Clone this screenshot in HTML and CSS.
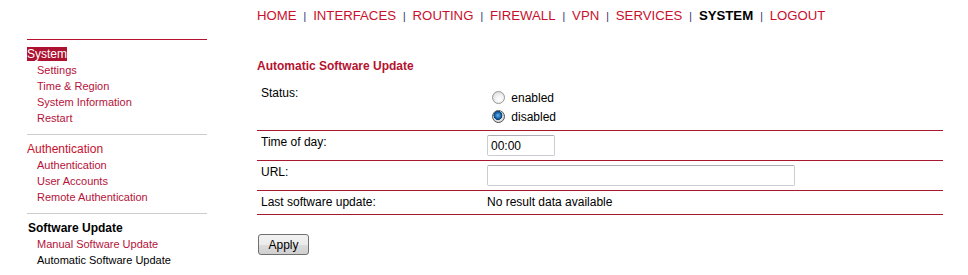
FILE: index.html
```html
<!DOCTYPE html>
<html lang="en">
<head>
  <meta charset="UTF-8">
  <title>System - Automatic Software Update</title>
  <link rel="stylesheet" href="styles.css">
</head>
<body>
  <div class="page">
    <div class="topnav">
      <a href="#">HOME</a><span class="sep">|</span><a href="#">INTERFACES</a><span class="sep">|</span><a href="#">ROUTING</a><span class="sep">|</span><a href="#">FIREWALL</a><span class="sep">|</span><a href="#">VPN</a><span class="sep">|</span><a href="#">SERVICES</a><span class="sep">|</span><a href="#" class="current">SYSTEM</a><span class="sep">|</span><a href="#">LOGOUT</a>
    </div>

    <div class="sidebar">
      <div class="group first">
        <div class="group-title"><span class="active">System</span></div>
        <a class="sub" href="#">Settings</a>
        <a class="sub" href="#">Time &amp; Region</a>
        <a class="sub" href="#">System Information</a>
        <a class="sub" href="#">Restart</a>
      </div>
      <div class="group">
        <div class="group-title"><a href="#">Authentication</a></div>
        <a class="sub" href="#">Authentication</a>
        <a class="sub" href="#">User Accounts</a>
        <a class="sub" href="#">Remote Authentication</a>
      </div>
      <div class="group">
        <div class="group-title bold">Software Update</div>
        <a class="sub" href="#">Manual Software Update</a>
        <span class="sub current">Automatic Software Update</span>
      </div>
    </div>

    <div class="content">
      <h1 class="title">Automatic Software Update</h1>
      <table class="form">
        <colgroup>
          <col class="label-col">
          <col>
        </colgroup>
        <tr>
          <td>Status:</td>
          <td class="radios">
            <label class="radio"><input type="radio" name="status"> enabled</label>
            <label class="radio"><input type="radio" name="status" checked> disabled</label>
          </td>
        </tr>
        <tr>
          <td>Time of day:</td>
          <td><input type="text" class="field time" value="00:00"></td>
        </tr>
        <tr>
          <td>URL:</td>
          <td><input type="text" class="field url" value=""></td>
        </tr>
        <tr>
          <td>Last software update:</td>
          <td>No result data available</td>
        </tr>
      </table>
      <button class="btn" type="button">Apply</button>
    </div>
  </div>
</body>
</html>
```

FILE: styles.css
```css
body {
  margin: 0;
  background: #fff;
  color: #000;
  font-family: "Liberation Sans", Arial, sans-serif;
  font-size: 12px;
}

a {
  text-decoration: none;
}

.page {
  display: grid;
  grid-template-columns: 180px 686px;
  column-gap: 50px;
  padding: 8px 0 0 27px;
}

/* top navigation */
.topnav {
  grid-column: 2;
  font-size: 13.2px;
  line-height: 16px;
  white-space: nowrap;
}

.topnav a {
  color: #c8102e;
}

.topnav a.current {
  color: #000;
  font-weight: bold;
}

.topnav .sep {
  color: #232360;
  font-size: 10px;
  margin: 0 7px;
}

/* left menu */
.sidebar {
  grid-column: 1;
  margin-top: 14px;
}

.group {
  border-top: 1px solid #ccc;
  padding: 6px 0 8px;
}

.group.first {
  border-top-color: #b5122f;
}

.group-title {
  line-height: 16px;
  font-size: 12px;
}

.group-title a {
  color: #c8102e;
}

.group-title .active {
  background: #ad1230;
  color: #fff;
}

.group-title.bold {
  font-weight: bold;
  color: #000;
  padding-left: 1px;
}

.sub {
  display: block;
  padding-left: 10px;
  font-size: 11px;
  line-height: 16px;
  color: #b5123a;
}

.sub.current {
  color: #000;
}

/* content */
.content {
  grid-column: 2;
  margin-top: 34px;
}

.title {
  margin: 0 0 9px;
  font-size: 12px;
  line-height: 14px;
  color: #b5122f;
}

.form {
  width: 686px;
  border-collapse: collapse;
  table-layout: fixed;
}

.label-col {
  width: 226px;
}

.form td {
  padding: 4px;
  line-height: 15px;
  vertical-align: top;
  border-bottom: 1px solid #a8192f;
}

.form td.radios {
  padding: 7px 4px 3px;
}

.radio {
  display: block;
  height: 19px;
  line-height: 19px;
}

.radio input {
  -webkit-appearance: none;
  appearance: none;
  width: 13px;
  height: 13px;
  margin: 0 3px 0 5px;
  vertical-align: -2px;
  border: 1px solid #969696;
  border-radius: 50%;
  background: radial-gradient(circle at 60% 65%, #ffffff 0, #f4f4f4 35%, #d2d2d2 100%);
  box-sizing: border-box;
}

.radio input:checked {
  border-color: #5a5a5a;
  background:
    radial-gradient(circle at 45% 40%, #6fb4e8 0, #1c6db6 30%, #0b3c6e 48%, transparent 52%),
    radial-gradient(circle, #e8e8e8 0, #cfcfcf 100%);
}

.field {
  display: block;
  height: 21px;
  box-sizing: border-box;
  margin: 0;
  padding: 0 3px;
  border: 1px solid #c9ccd3;
  border-top-color: #abadb3;
  border-radius: 2px;
  font-family: inherit;
  font-size: 12px;
  color: #000;
}

.field.time {
  width: 68px;
}

.field.url {
  width: 308px;
}

.btn {
  display: block;
  margin: 19px 0 0 1px;
  width: 51px;
  height: 21px;
  padding: 0;
  border: 1px solid #707070;
  border-radius: 3px;
  background: linear-gradient(#f2f2f2, #ebebeb 50%, #dddddd 50%, #cfcfcf);
  font-family: inherit;
  font-size: 12px;
  color: #000;
}
```
